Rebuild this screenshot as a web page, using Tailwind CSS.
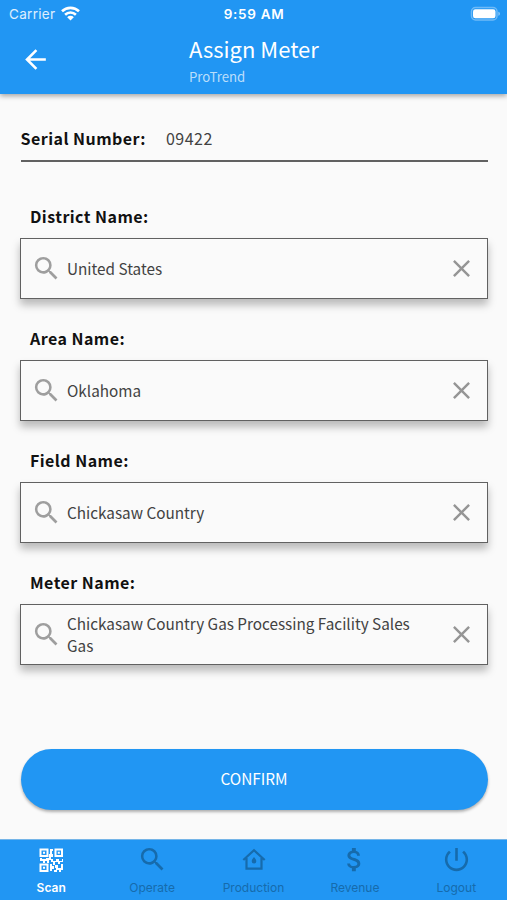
<!DOCTYPE html>
<html lang="en">
<head>
<meta charset="utf-8">
<meta name="viewport" content="width=device-width, initial-scale=1">
<title>Assign Meter</title>
<script src="https://cdn.jsdelivr.net/npm/@tailwindcss/browser@4"></script>
</head>
<body class="bg-[#fafafa]">
<svg class="hidden">
  <symbol id="search" viewBox="0 0 24 24"><path d="M15.5 14h-.79l-.28-.27A6.471 6.471 0 0 0 16 9.5 6.5 6.5 0 1 0 9.5 16c1.61 0 3.09-.59 4.23-1.57l.27.28v.79l5 4.99L20.49 19l-4.99-5zm-6 0C7.01 14 5 11.99 5 9.5S7.01 5 9.5 5 14 7.01 14 9.5 11.99 14 9.5 14z" fill="currentColor"/></symbol>
  <symbol id="clear" viewBox="0 0 24 24"><path d="M19 6.41L17.59 5 12 10.59 6.41 5 5 6.41 10.59 12 5 17.59 6.41 19 12 13.41 17.59 19 19 17.59 13.41 12z" fill="currentColor"/></symbol>
</svg>
<div class="flex h-[900px] w-[507px] flex-col overflow-hidden bg-[#fafafa] font-['Noto_Sans_CJK_SC',sans-serif]">
  <header class="h-[94px] shrink-0 bg-[#2196f3] text-white shadow-[0_2px_5px_rgba(0,0,0,0.35)]">
    <div class="grid h-7 grid-cols-3 items-center pr-[7px] pl-[9px] font-['Inter',sans-serif] text-[13px]">
      <div class="flex items-center gap-[6px] text-white/85"><span class="text-[13.500px] tracking-[0.3px]">Carrier</span>
        <svg class="-mt-[2px] h-[15px] w-[19px] text-white" viewBox="0 0 19 15" fill="none" stroke="currentColor" stroke-width="2.6"><path d="M1 5.3a12.2 12.2 0 0 1 17 0M4.1 8.7a7.8 7.8 0 0 1 10.8 0"/><path d="M9.500 14.500L6.200 11.200a4.700 4.700 0 0 1 6.600 0z" fill="currentColor" stroke="none"/></svg>
      </div>
      <div class="pt-px pr-px text-center text-[13.500px] font-semibold tracking-[0.7px] whitespace-nowrap">9:59 AM</div>
      <svg class="-mt-[2px] h-[15px] w-[30px] justify-self-end" viewBox="0 0 30 15"><rect x="1.500" y="1.500" width="25.500" height="12.500" rx="4" fill="none" stroke="#fff" stroke-opacity=".35" stroke-width="1.500"/><rect x="3" y="3.200" width="22.500" height="9" rx="2.300" fill="#fff"/><path d="M28.400 5.700c2 .7 2 3.300 0 4z" fill="#fff" fill-opacity=".5"/></svg>
    </div>
    <div class="flex h-[66px]">
      <div class="w-[189px] pt-[16px] pl-[20px]"><svg class="size-[31px]" viewBox="0 0 24 24" fill="currentColor"><path d="M20 11H7.830l5.590-5.590L12 4l-8 8 8 8 1.410-1.410L7.830 13H20v-2z"/></svg></div>
      <div class="pt-[5px]">
        <h1 class="text-[22px] leading-[30px]">Assign Meter</h1>
        <p class="mt-[4px] text-[13.200px] leading-[20px] text-white/70">ProTrend</p>
      </div>
    </div>
  </header>

  <main class="flex grow flex-col px-[20px] text-[15.300px] text-[#424242]">
    <div class="mt-[24px] ml-[0.5px] flex h-[44px] w-[467px] gap-[20px] border-b-2 border-[#616161] leading-[41px]"><span class="text-[16px] font-bold tracking-[0.470px] text-[#111]">Serial Number:</span><span class="text-[16px] tracking-[0.500px]">09422</span></div>

    <label class="mt-[42px] ml-[10px] h-[34px] text-[16px] leading-[24px] font-bold tracking-[0.450px] text-[#111]">District Name:</label>
    <div class="flex h-[61px] w-[468px] shrink-0 items-center border-[1.500px] border-[#616161] bg-[#fafafa] pr-[11px] pl-[10px] shadow-[0_6px_8px_rgba(0,0,0,0.26)]"><svg class="size-[31px] shrink-0 text-[#9e9e9e]"><use href="#search"/></svg><span class="-mt-px ml-[5px] grow leading-[22px]">United States</span><svg class="size-[29px] shrink-0 text-[#959595]"><use href="#clear"/></svg></div>

    <label class="mt-[27px] ml-[10px] h-[34px] text-[16px] leading-[24px] font-bold tracking-[0.450px] text-[#111]">Area Name:</label>
    <div class="flex h-[61px] w-[468px] shrink-0 items-center border-[1.500px] border-[#616161] bg-[#fafafa] pr-[11px] pl-[10px] shadow-[0_6px_8px_rgba(0,0,0,0.26)]"><svg class="size-[31px] shrink-0 text-[#9e9e9e]"><use href="#search"/></svg><span class="-mt-px ml-[5px] grow leading-[22px]">Oklahoma</span><svg class="size-[29px] shrink-0 text-[#959595]"><use href="#clear"/></svg></div>

    <label class="mt-[27px] ml-[10px] h-[34px] text-[16px] leading-[24px] font-bold tracking-[0.450px] text-[#111]">Field Name:</label>
    <div class="flex h-[61px] w-[468px] shrink-0 items-center border-[1.500px] border-[#616161] bg-[#fafafa] pr-[11px] pl-[10px] shadow-[0_6px_8px_rgba(0,0,0,0.26)]"><svg class="size-[31px] shrink-0 text-[#9e9e9e]"><use href="#search"/></svg><span class="-mt-px ml-[5px] grow leading-[22px]">Chickasaw Country</span><svg class="size-[29px] shrink-0 text-[#959595]"><use href="#clear"/></svg></div>

    <label class="mt-[27px] ml-[10px] h-[34px] text-[16px] leading-[24px] font-bold tracking-[0.450px] text-[#111]">Meter Name:</label>
    <div class="flex h-[61px] w-[468px] shrink-0 items-center border-[1.500px] border-[#616161] bg-[#fafafa] pr-[11px] pl-[10px] shadow-[0_6px_8px_rgba(0,0,0,0.26)]"><svg class="size-[31px] shrink-0 text-[#9e9e9e]"><use href="#search"/></svg><span class="-mt-px ml-[5px] grow leading-[22px]">Chickasaw Country Gas Processing Facility Sales<br>Gas</span><svg class="size-[29px] shrink-0 text-[#959595]"><use href="#clear"/></svg></div>

    <button class="mt-[83.500px] ml-[0.5px] h-[61px] w-[467px] shrink-0 rounded-[31px] bg-[#2196f3] text-[15.400px] text-white shadow-[0_2px_3px_rgba(0,0,0,0.3)]">CONFIRM</button>
  </main>

  <nav class="grid h-[61px] shrink-0 grid-cols-5 border-t border-[#75b5e8] bg-[#2196f3] font-['Inter',sans-serif] text-[12px] text-[#166bac]">
    <div class="flex flex-col items-center pt-[8px] text-white">
      <svg class="size-[24px]" viewBox="0 0 24 24" fill="currentColor"><path fill-rule="evenodd" d="M.5.500h9v8.500h-9zM2.500 2.500v4.500h5v-4.500zM15.500.500h8.500v8.500h-8.500zM17.500 2.500v4.500h4.500v-4.500zM.5 15.500h9v8.500h-9zM2.500 17.500v4.500h5v-4.500z"/><path d="M4 3.700h2v2H4zM18.800 3.700h2v2h-2zM4 18.700h2v2H4zM11 1h3v2h-1v3h1v3h-2v2h2v2h3v-2h3v2h3v-2h1v3h-3v2h-2v-2h-3v3h-2v-3h-2v-2h-2v3H8v-2H6v2H4v-2H1v-3h2v1h4v-1h3V6h1zM11 16h2v2h2v3h-2v2h-2zM16 17h3v3h3v-4h2v6h-2v2h-2v-2h-2v2h-3v-2h2v-2h-1z"/></svg>
      <span class="mt-[8px] ml-[1px] leading-[16px] font-semibold">Scan</span></div>
    <div class="flex flex-col items-center pt-[4px]"><svg class="size-[31px]"><use href="#search"/></svg><span class="mt-[5px] leading-[16px]">Operate</span></div>
    <div class="flex flex-col items-center pt-[8px]">
      <svg class="ml-[1px] size-[24px]" viewBox="0 0 24 24"><path d="M1.300 12L12 2.200 22.700 12M4.500 10v10.700h15V10" fill="none" stroke="currentColor" stroke-width="2.200"/><path d="M12 9c1.400 1.800 2.300 2.900 2.300 4.200a2.300 2.300 0 0 1-4.600 0c0-1.300.9-2.400 2.300-4.200z" fill="currentColor"/></svg>
      <span class="mt-[8px] leading-[16px]">Production</span></div>
    <div class="flex flex-col items-center pt-[4px]">
      <svg class="size-[31px]" viewBox="0 0 24 24" fill="currentColor"><path d="M11.800 10.900c-2.270-.59-3-1.200-3-2.150 0-1.090 1.010-1.850 2.700-1.850 1.780 0 2.440.85 2.500 2.100h2.210c-.07-1.720-1.120-3.300-3.210-3.810V3h-3v2.160c-1.940.42-3.500 1.680-3.500 3.610 0 2.310 1.910 3.460 4.700 4.130 2.500.6 3 1.480 3 2.410 0 .69-.49 1.790-2.700 1.790-2.060 0-2.870-.92-2.980-2.100h-2.200c.12 2.190 1.760 3.420 3.680 3.830V21h3v-2.150c1.950-.37 3.500-1.500 3.500-3.550 0-2.840-2.430-3.810-4.700-4.400z"/></svg>
      <span class="mt-[5px] leading-[16px]">Revenue</span></div>
    <div class="flex flex-col items-center pt-[4px]">
      <svg class="size-[31px]" viewBox="0 0 24 24" fill="currentColor"><path d="M13 3h-2v10h2V3zm4.830 2.170l-1.420 1.420C17.990 7.860 19 9.810 19 12c0 3.870-3.130 7-7 7s-7-3.130-7-7c0-2.190 1.010-4.140 2.580-5.420L6.170 5.170C4.230 6.820 3 9.260 3 12c0 4.970 4.030 9 9 9s9-4.030 9-9c0-2.740-1.230-5.180-3.170-6.830z"/></svg>
      <span class="mt-[5px] leading-[16px]">Logout</span></div>
  </nav>
</div>
</body>
</html>
